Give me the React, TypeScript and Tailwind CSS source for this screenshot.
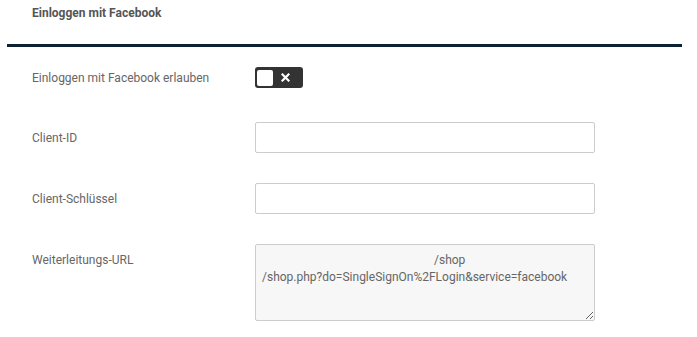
const url = '/shop\n/shop.php?do=SingleSignOn%2FLogin&service=facebook'

function Toggle() {
  return (
    <div className="w-[48px] h-[21px] rounded-[3px] bg-[#333333] flex items-center px-[2px] gap-[8px]">
      <div className="w-[16px] h-[16px] rounded-[2px] bg-white" />
      <svg width="9" height="9" viewBox="0 0 9 9" className="text-white">
        <path d="M1.5 1.5l6 6M7.5 1.5l-6 6" stroke="currentColor" strokeWidth={2.2} strokeLinecap="square" />
      </svg>
    </div>
  )
}

export default function App() {
  return (
    <div className="w-[697px] h-[337px] bg-white font-['Roboto',sans-serif] text-[12px] text-[#666666]">
      <div className="h-[44px] pl-[32px] pt-[4px] font-bold text-[#555555]">Einloggen mit Facebook</div>
      <div className="ml-[7px] w-[675px] h-[3px] bg-[#0c2233]" />

      <div className="pl-[32px] flex flex-col">
        <div className="mt-[20px] flex items-center">
          <span className="w-[223px]">Einloggen mit Facebook erlauben</span>
          <Toggle />
        </div>

        <div className="mt-[34px] flex items-center">
          <span className="w-[223px]">Client-ID</span>
          <input className="w-[340px] h-[31px] border border-[#cccccc] rounded-[2px] bg-white outline-none" />
        </div>

        <div className="mt-[30px] flex items-center">
          <span className="w-[223px]">Client-Schlüssel</span>
          <input className="w-[340px] h-[31px] border border-[#cccccc] rounded-[2px] bg-white outline-none" />
        </div>

        <div className="mt-[30px] flex items-start">
          <span className="w-[223px] pt-[7px]">Weiterleitungs-URL</span>
          <textarea
            readOnly
            value={url}
            className="w-[340px] h-[77px] border border-[#cccccc] rounded-[2px] bg-[#f7f7f7] px-[6px] pt-[7px] leading-[17px] indent-[172px] text-[#666666] outline-none resize"
          />
        </div>
      </div>
    </div>
  )
}
